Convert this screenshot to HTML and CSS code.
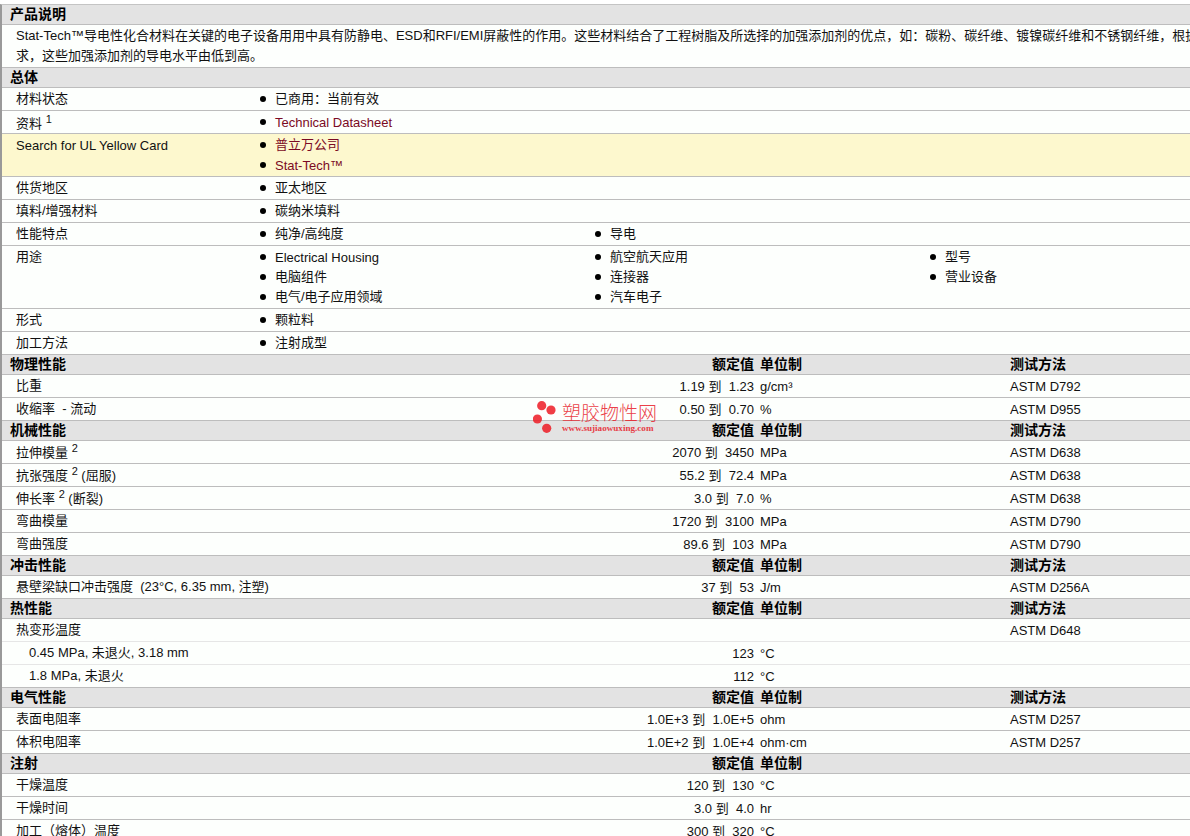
FILE: index.html
```html
<!DOCTYPE html>
<html lang="zh">
<head>
<meta charset="utf-8">
<title>Stat-Tech</title>
<link rel="stylesheet" href="styles.css">
</head>
<body>
<main class="sheet">
  <div class="head">产品说明</div>
  <div class="desc">Stat-Tech™导电性化合材料在关键的电子设备用用中具有防静电、ESD和RFI/EMI屏蔽性的作用。这些材料结合了工程树脂及所选择的加强添加剂的优点，如：碳粉、碳纤维、镀镍碳纤维和不锈钢纤维，根据<br>求，这些加强添加剂的导电水平由低到高。</div>

  <div class="head">总体</div>
  <div class="row"><div class="label">材料状态</div><ul class="vals"><li>已商用：当前有效</li></ul></div>
  <div class="row"><div class="label low2">资料 <sup>1</sup></div><ul class="vals"><li><a class="en">Technical Datasheet</a></li></ul></div>
  <div class="row yellow"><div class="label low1">Search for UL Yellow Card</div><ul class="vals"><li><a>普立万公司</a></li><li><a class="en">Stat-Tech™</a></li></ul></div>
  <div class="row"><div class="label">供货地区</div><ul class="vals"><li>亚太地区</li></ul></div>
  <div class="row"><div class="label">填料/增强材料</div><ul class="vals"><li>碳纳米填料</li></ul></div>
  <div class="row"><div class="label">性能特点</div><ul class="vals"><li>纯净/高纯度</li></ul><ul class="vals"><li>导电</li></ul></div>
  <div class="row"><div class="label">用途</div>
    <ul class="vals"><li><span class="en">Electrical Housing</span></li><li>电脑组件</li><li>电气/电子应用领域</li></ul>
    <ul class="vals"><li>航空航天应用</li><li>连接器</li><li>汽车电子</li></ul>
    <ul class="vals"><li>型号</li><li>营业设备</li></ul>
  </div>
  <div class="row"><div class="label">形式</div><ul class="vals"><li>颗粒料</li></ul></div>
  <div class="row"><div class="label">加工方法</div><ul class="vals"><li>注射成型</li></ul></div>

  <div class="phead"><span>物理性能</span><span class="num">额定值</span><span class="unit">单位制</span><span>测试方法</span></div>
  <div class="prop"><span>比重</span><span class="num">1.19 到&nbsp;&nbsp;1.23</span><span class="unit">g/cm³</span><span class="test">ASTM D792</span></div>
  <div class="prop"><span>收缩率 &nbsp;- 流动</span><span class="num">0.50 到&nbsp;&nbsp;0.70</span><span class="unit">%</span><span class="test">ASTM D955</span></div>

  <div class="phead"><span>机械性能</span><span class="num">额定值</span><span class="unit">单位制</span><span>测试方法</span></div>
  <div class="prop"><span class="note">拉伸模量 <sup>2</sup></span><span class="num">2070 到&nbsp;&nbsp;3450</span><span class="unit">MPa</span><span class="test">ASTM D638</span></div>
  <div class="prop"><span class="note">抗张强度 <sup>2</sup> (屈服)</span><span class="num">55.2 到&nbsp;&nbsp;72.4</span><span class="unit">MPa</span><span class="test">ASTM D638</span></div>
  <div class="prop"><span class="note">伸长率 <sup>2</sup> (断裂)</span><span class="num">3.0 到&nbsp;&nbsp;7.0</span><span class="unit">%</span><span class="test">ASTM D638</span></div>
  <div class="prop"><span>弯曲模量</span><span class="num">1720 到&nbsp;&nbsp;3100</span><span class="unit">MPa</span><span class="test">ASTM D790</span></div>
  <div class="prop"><span>弯曲强度</span><span class="num">89.6 到&nbsp;&nbsp;103</span><span class="unit">MPa</span><span class="test">ASTM D790</span></div>

  <div class="phead"><span>冲击性能</span><span class="num">额定值</span><span class="unit">单位制</span><span>测试方法</span></div>
  <div class="prop"><span>悬壁梁缺口冲击强度 &nbsp;(23°C, 6.35 mm, 注塑)</span><span class="num">37 到&nbsp;&nbsp;53</span><span class="unit">J/m</span><span class="test">ASTM D256A</span></div>

  <div class="phead"><span>热性能</span><span class="num">额定值</span><span class="unit">单位制</span><span>测试方法</span></div>
  <div class="prop light"><span>热变形温度</span><span class="num"></span><span class="unit"></span><span class="test">ASTM D648</span></div>
  <div class="prop light"><span class="sub">0.45 MPa, 未退火, 3.18 mm</span><span class="num">123</span><span class="unit">°C</span><span></span></div>
  <div class="prop"><span class="sub">1.8 MPa, 未退火</span><span class="num">112</span><span class="unit">°C</span><span></span></div>

  <div class="phead"><span>电气性能</span><span class="num">额定值</span><span class="unit">单位制</span><span>测试方法</span></div>
  <div class="prop"><span>表面电阻率</span><span class="num">1.0E+3 到&nbsp;&nbsp;1.0E+5</span><span class="unit">ohm</span><span class="test">ASTM D257</span></div>
  <div class="prop"><span>体积电阻率</span><span class="num">1.0E+2 到&nbsp;&nbsp;1.0E+4</span><span class="unit">ohm·cm</span><span class="test">ASTM D257</span></div>

  <div class="phead"><span>注射</span><span class="num">额定值</span><span class="unit">单位制</span><span></span></div>
  <div class="prop"><span>干燥温度</span><span class="num">120 到&nbsp;&nbsp;130</span><span class="unit">°C</span><span></span></div>
  <div class="prop"><span>干燥时间</span><span class="num">3.0 到&nbsp;&nbsp;4.0</span><span class="unit">hr</span><span></span></div>
  <div class="prop"><span>加工（熔体）温度</span><span class="num">300 到&nbsp;&nbsp;320</span><span class="unit">°C</span><span></span></div>
</main>
<div class="mark">
  <svg class="mark-dots" width="26" height="34" viewBox="0 0 26 34" aria-hidden="true">
    <circle cx="8.7" cy="5.7" r="4.6"/><circle cx="18" cy="10" r="4.6"/><circle cx="4.4" cy="19" r="4.6"/><circle cx="13.7" cy="28.3" r="4.6"/>
  </svg>
  <div class="mark-text">
    <div class="mark-cn">塑胶物性网</div>
    <div class="mark-en">www.sujiaowuxing.com</div>
  </div>
</div>
</body>
</html>
```
FILE: styles.css
```css
html, body {
  margin: 0;
  height: 836px;
  overflow: hidden;
  background: #fff;
}
body {
  position: relative;
  font-family: "Liberation Sans", "Noto Sans CJK SC", sans-serif;
  font-size: 13px;
  color: #111;
  padding-top: 4px;
  box-sizing: border-box;
}
.sheet {
  border-left: 2px solid #999;
  border-top: 1px solid #c4c4c4;
  background: #fdfffd;
  white-space: nowrap;
}
.head, .phead {
  height: 19px;
  line-height: 18px;
  background: #e3e3e3;
  border-bottom: 1px solid #bdbdbd;
  font-weight: 700;
  font-size: 14px;
  color: #000;
}
.head { padding-left: 8px; }
.desc {
  padding: 1px 0 1px 14px;
  line-height: 20px;
  border-bottom: 1px solid #bdbdbd;
}
.row {
  display: grid;
  grid-template-columns: 244px 335px 335px 1fr;
  padding: 1px 0 1px 14px;
  line-height: 20px;
  border-bottom: 1px solid #bdbdbd;
}
.yellow { background: #fdf8ce; }
.label {
  height: 20px;
  box-sizing: border-box;
}
.low1 { padding-top: 1px; }
.low2 { padding-top: 2px; }
.vals {
  list-style: none;
  margin: 0;
  padding: 0;
}
.vals li {
  display: flex;
  align-items: center;
  gap: 9px;
  height: 20px;
}
.vals li::before {
  content: "";
  width: 6px;
  height: 6px;
  border-radius: 50%;
  background: #000;
}
a { color: #7b0a24; }
.en {
  line-height: 16px;
  padding-top: 2px;
}
sup {
  font-size: 11px;
  line-height: 0;
  vertical-align: 5px;
}
.prop, .phead {
  display: grid;
  grid-template-columns: 500px 238px 256px 1fr;
}
.prop {
  height: 20px;
  padding: 1px 0 1px 14px;
  line-height: 20px;
  border-bottom: 1px solid #bdbdbd;
}
.prop > span { height: 20px; box-sizing: border-box; }
.prop.light { border-bottom-color: #e6e6e6; }
.prop .num, .prop .unit, .prop .test, .prop .note { padding-top: 1px; }
.phead { padding-left: 8px; grid-template-columns: 506px 238px 256px 1fr; }
.num { text-align: right; }
.unit { padding-left: 6px; }
.sub { padding-left: 13px; }
.mark {
  position: absolute;
  left: 533px;
  top: 400px;
  display: flex;
  gap: 3px;
  color: #e8202a;
  opacity: .85;
}
.mark-dots { fill: #ee1c25; }
.mark-text { padding-top: 3px; }
.mark-cn {
  font-size: 19px;
  line-height: 21px;
  font-weight: 300;
}
.mark-en {
  font-family: "Liberation Serif", serif;
  font-size: 9.1px;
  font-weight: 700;
  line-height: 9px;
}
```
